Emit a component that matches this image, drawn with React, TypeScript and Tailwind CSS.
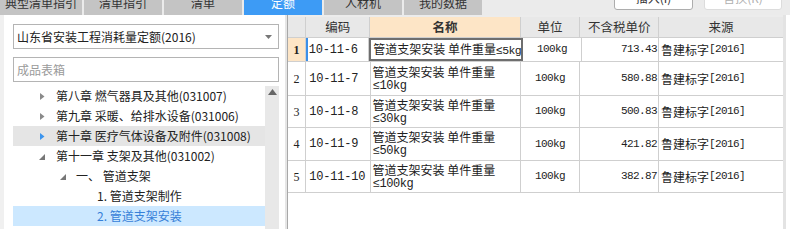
import React from 'react'

const tabs = ['典型清单指引', '清单指引', '清单', '定额', '人材机', '我的数据']

interface TreeRow {
  label: string
  level: number
  arrow?: 'closed' | 'open'
  state?: 'hover' | 'selected'
}

const tree: TreeRow[] = [
  { label: '第八章 燃气器具及其他(031007)', level: 0, arrow: 'closed' },
  { label: '第九章 采暖、给排水设备(031006)', level: 0, arrow: 'closed' },
  { label: '第十章 医疗气体设备及附件(031008)', level: 0, arrow: 'closed', state: 'hover' },
  { label: '第十一章 支架及其他(031002)', level: 0, arrow: 'open' },
  { label: '一、  管道支架', level: 1, arrow: 'open' },
  { label: '1. 管道支架制作', level: 2 },
  { label: '2. 管道支架安装', level: 2, state: 'selected' },
]

const rows = [
  { no: 1, code: '10-11-6', limit: '≤5kg', price: '713.43', h: 'h-[24px]' },
  { no: 2, code: '10-11-7', limit: '≤10kg', price: '580.88', h: 'h-[34px]' },
  { no: 3, code: '10-11-8', limit: '≤30kg', price: '500.83', h: 'h-[32px]' },
  { no: 4, code: '10-11-9', limit: '≤50kg', price: '421.82', h: 'h-[33px]' },
  { no: 5, code: '10-11-10', limit: '≤100kg', price: '382.87', h: 'h-[32px]' },
]

const mono = "font-['Liberation_Mono','Noto_Sans_CJK_SC',monospace]"

const Arrow = ({ kind, active }: { kind: 'closed' | 'open'; active?: boolean }) =>
  kind === 'closed' ? (
    <svg width="8" height="9" viewBox="0 0 8 9">
      <path d="M2 1 L6.5 4.5 L2 8 Z" fill={active ? '#3c95ee' : '#8a8a8a'} />
    </svg>
  ) : (
    <svg width="8" height="9" viewBox="0 0 8 9">
      <path d="M7 2 L7 8 L1 8 Z" fill="#777" />
    </svg>
  )

export default function App() {
  return (
    <div className="w-[790px] h-[229px] overflow-hidden bg-[#f0f0f0] flex flex-col text-[12px] text-[#222] font-['Noto_Sans_CJK_SC','Noto_Sans',sans-serif]">
      {/* top tabs, partly scrolled off */}
      <div className="h-[15px] flex items-end overflow-hidden bg-[#ebebeb]">
        <div className="flex gap-[2px] items-end">
          {tabs.map((t, i) => (
            <div
              key={t}
              className={`h-[24px] flex items-center justify-center leading-none ${i === 0 ? 'w-[82px]' : 'w-[78px]'} ${
                i === 3 ? 'bg-[#3d9bf5] text-white' : 'bg-[#c4c4c4] text-[#333]'
              }`}
            >
              {t}
            </div>
          ))}
        </div>
        <div className="flex-1" />
        <div className="flex gap-[11px] self-start mt-[-14px] mr-[8px]">
          <div className="w-[79px] h-[24px] rounded-[3px] border border-[#adadad] bg-white flex items-center justify-center text-[#333]">
            插入(I)
          </div>
          <div className="w-[78px] h-[24px] rounded-[3px] border border-[#dcdcdc] bg-white flex items-center justify-center text-[#b0b0b0]">
            替换(R)
          </div>
        </div>
      </div>

      <div className="flex flex-1 min-h-0">
        <div className="w-[4px]" />
        {/* left panel */}
        <div className="w-[281px] bg-white flex flex-col pl-[9px] pr-[6px] pt-[9px]">
          <div className="h-[25px] border border-[#b4b4b4] flex items-center pl-[3px] pr-[6px]">
            <span className="flex-1">山东省安装工程消耗量定额(2016)</span>
            <svg width="7" height="4" viewBox="0 0 7 4">
              <path d="M0 0 L7 0 L3.5 4 Z" fill="#777" />
            </svg>
          </div>
          <div className="h-[25px] mt-[8px] border border-[#b4b4b4] flex items-center pl-[3px] text-[#9a9a9a]">
            成品表箱
          </div>
          <div className="flex mt-[4px] flex-1 min-h-0">
            <div className="flex-1 flex flex-col">
              {tree.map((r) => (
                <div
                  key={r.label}
                  className={`h-[20px] flex items-center whitespace-nowrap ${
                    r.state === 'hover' ? 'bg-[#e5e5e5]' : r.state === 'selected' ? 'bg-[#cce8ff] text-[#3680d8]' : ''
                  }`}
                >
                  <div
                    className={`flex items-center shrink-0 ${
                      r.level === 0 ? 'w-[43px] pl-[25px]' : r.level === 1 ? 'w-[63px] pl-[46px]' : 'w-[84px]'
                    }`}
                  >
                    {r.arrow && <Arrow kind={r.arrow} active={r.state === 'hover'} />}
                  </div>
                  <span>{r.label}</span>
                </div>
              ))}
            </div>
            <div className="w-[14px] bg-[#e8e8e8] flex justify-center pt-[3px]">
              <svg width="9" height="6" viewBox="0 0 9 6">
                <path d="M0 6 L4.5 0 L9 6 Z" fill="#666" />
              </svg>
            </div>
          </div>
        </div>
        <div className="w-[2px] bg-[#e6e6e6]" />

        {/* table */}
        <div className="flex-1 flex border-l border-[#a8a8a8] bg-white">
          <div className="w-[495px] overflow-hidden flex flex-col">
            <div className="h-[2px] bg-[#ececec]" />
            <div className="flex h-[21px] bg-[#e8e8e8] border-b border-[#cfcfcf] text-[12.5px] text-[#333]">
              <div className="w-[20px] border-r border-[#cfcfcf]" />
              <div className="w-[71px] border-r border-[#cfcfcf] flex items-center justify-center">编码</div>
              <div className="w-[166px] border-r border-[#cfcfcf] bg-[#fde5c6] flex items-center justify-center font-bold">名称</div>
              <div className="w-[66px] border-r border-[#cfcfcf] flex items-center justify-center">单位</div>
              <div className="w-[87px] border-r border-[#cfcfcf] flex items-center justify-center">不含税单价</div>
              <div className="w-[124px] shrink-0 flex items-center justify-center">来源</div>
            </div>
            {rows.map((r) => {
              const first = r.no === 1
              return (
                <div key={r.no} className={`flex ${r.h} border-b border-[#cfcfcf]`}>
                  <div
                    className={`w-[20px] border-r border-[#cfcfcf] flex items-center justify-center font-['Liberation_Serif',serif] text-[12px] ${
                      first ? 'bg-[#fde5c6] font-bold' : ''
                    }`}
                  >
                    {r.no}
                  </div>
                  <div
                    className={`w-[71px] border-r border-[#cfcfcf] flex items-center ${mono} text-[12px] tracking-[-0.2px] ${
                      first ? 'border-l-2 border-l-[#3b8fe8] pl-[1px]' : 'pl-[3px]'
                    }`}
                  >
                    {r.code}
                  </div>
                  <div
                    className={`w-[166px] flex flex-col justify-center pl-[2px] leading-[14px] ${
                      first ? 'border-2 border-[#6e6e6e]' : 'border-r border-[#cfcfcf]'
                    }`}
                  >
                    {first ? (
                      <span className="whitespace-nowrap">
                        管道支架安装 单件重量<span className={`${mono} text-[11.5px] tracking-[-0.6px]`}>{r.limit}</span>
                      </span>
                    ) : (
                      <>
                        <span className="whitespace-nowrap">管道支架安装 单件重量</span>
                        <span className={`${mono} text-[12px] tracking-[-0.4px]`}>{r.limit}</span>
                      </>
                    )}
                  </div>
                  <div className={`w-[66px] border-r border-[#cfcfcf] flex items-center justify-center ${mono} text-[11px] tracking-[-0.6px]`}>
                    100kg
                  </div>
                  <div className={`w-[87px] border-r border-[#cfcfcf] flex items-center justify-end pr-[1px] ${mono} text-[11px] tracking-[-0.6px]`}>
                    {r.price}
                  </div>
                  <div className="w-[124px] shrink-0 flex items-center pl-[2px] whitespace-nowrap">
                    鲁建标字<span className={`${mono} text-[11px] tracking-[-0.6px]`}>[2016]</span>
                  </div>
                </div>
              )
            })}
          </div>
          <div className="w-[3px] bg-[#e3e3e3]" />
          <div className="flex-1 bg-white" />
        </div>
      </div>
    </div>
  )
}
